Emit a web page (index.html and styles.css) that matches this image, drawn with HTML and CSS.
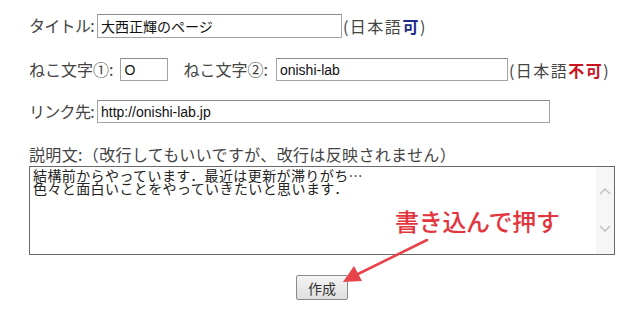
FILE: index.html
```html
<!DOCTYPE html>
<html lang="ja">
<head>
<meta charset="utf-8">
<title>作成フォーム</title>
<link rel="stylesheet" href="styles.css">
</head>
<body>
<div class="page">
  <div class="row r1">
    <span class="lbl tight">タイトル:</span>
    <input class="field f-title" type="text" value="大西正輝のページ">
    <span class="note">(日本語<b class="ok">可</b>)</span>
  </div>
  <div class="row r2">
    <span class="lbl">ねこ文字①:</span>
    <input class="field f-neko1 latin" type="text" value="O">
    <span class="lbl lbl2">ねこ文字②:</span>
    <input class="field f-neko2 latin" type="text" value="onishi-lab">
    <span class="note">(日本語<b class="ng">不可</b>)</span>
  </div>
  <div class="row r3">
    <span class="lbl tight">リンク先:</span>
    <input class="field f-link latin" type="text" value="http://onishi-lab.jp">
  </div>
  <div class="desc-label">説明文:（改行してもいいですが、改行は反映されません）</div>
  <div class="memo">
    <textarea class="memo-text">結構前からやっています．最近は更新が滞りがち…
色々と面白いことをやっていきたいと思います．</textarea>
    <div class="scroll">
      <svg width="12" height="8" viewBox="0 0 12 8"><path d="M1 7 L6 2 L11 7" fill="none" stroke="#c4c4c4" stroke-width="1.6"/></svg>
      <svg width="12" height="8" viewBox="0 0 12 8"><path d="M1 1 L6 6 L11 1" fill="none" stroke="#c4c4c4" stroke-width="1.6"/></svg>
    </div>
  </div>
  <div class="actions">
    <button class="btn" type="button">作成</button>
  </div>
  <div class="callout">書き込んで押す</div>
  <svg class="arrow" width="640" height="310" viewBox="0 0 640 310">
    <line x1="427" y1="240" x2="356" y2="275" stroke="#e8424a" stroke-width="2.6" stroke-linecap="round"/>
    <polygon points="343,282 354,266 362,281" fill="#e8424a"/>
  </svg>
</div>
</body>
</html>
```

FILE: styles.css
```css
* { box-sizing: border-box; }
html, body { margin: 0; padding: 0; background: #fff; }
body {
  font-family: "Noto Sans CJK JP", "Noto Sans", sans-serif;
  color: #444;
  font-size: 16px;
}
.page {
  position: relative;
  width: 640px;
  height: 310px;
  padding: 14px 0 0 29px;
}
.row {
  display: flex;
  align-items: center;
  height: 23px;
}
.r2 { margin-top: 21px; }
.r3 { margin-top: 19px; }
.lbl { line-height: 23px; white-space: nowrap; }
.tight { letter-spacing: -0.7px; }
.lbl2 { margin-left: 15px; }
.field {
  height: 23px;
  border: 1px solid #a3a3a3;
  border-top-color: #8c8c8c;
  padding: 0 3px;
  margin: 0 0 0 3px;
  font-family: "Noto Sans CJK JP", sans-serif;
  font-size: 14px;
  color: #111;
  background: #fff;
  outline: none;
}
.latin { font-family: "Liberation Sans", Arial, sans-serif; }
.f-title { width: 245px; height: 24px; }
.f-neko1 { width: 48px; margin-left: 7px; }
.f-neko2 { width: 232px; margin-left: 8px; }
.f-link { width: 453px; }
.note { margin-left: 1px; white-space: nowrap; letter-spacing: 1.5px; }
.note b { font-weight: 700; }
.ok { color: #1c2a8a; }
.ng { color: #c8141e; }
.desc-label {
  margin-top: 21px;
  height: 22px;
  line-height: 20px;
  letter-spacing: 0.35px;
  white-space: nowrap;
}
.memo {
  display: flex;
  width: 586px;
  height: 89px;
  border: 1px solid #6a6a6a;
  background: #fff;
}
.memo-text {
  flex: 1;
  border: 0;
  resize: none;
  outline: none;
  padding: 2px 3px;
  font-family: "Noto Sans CJK JP", monospace;
  font-size: 14px;
  line-height: 13px;
  letter-spacing: 0.4px;
  color: #222;
  overflow: hidden;
}
.scroll {
  width: 18px;
  background: #f6f6f6;
  display: flex;
  flex-direction: column;
  align-items: center;
  justify-content: center;
  gap: 30px;
  padding-bottom: 2px;
}
.actions {
  width: 586px;
  display: flex;
  justify-content: center;
  margin-top: 20px;
}
.btn {
  width: 52px;
  height: 25px;
  border: 1px solid #8a8a8a;
  border-radius: 2px;
  background: linear-gradient(#f4f4f4, #dedede);
  font-family: "Noto Sans CJK JP", sans-serif;
  font-size: 14px;
  color: #333;
  padding: 0;
}
.callout {
  position: absolute;
  left: 395px;
  top: 203px;
  font-size: 24px;
  font-weight: 500;
  color: #e3353d;
  letter-spacing: -0.3px;
  white-space: nowrap;
}
.arrow {
  position: absolute;
  left: 0;
  top: 0;
  pointer-events: none;
}
```
